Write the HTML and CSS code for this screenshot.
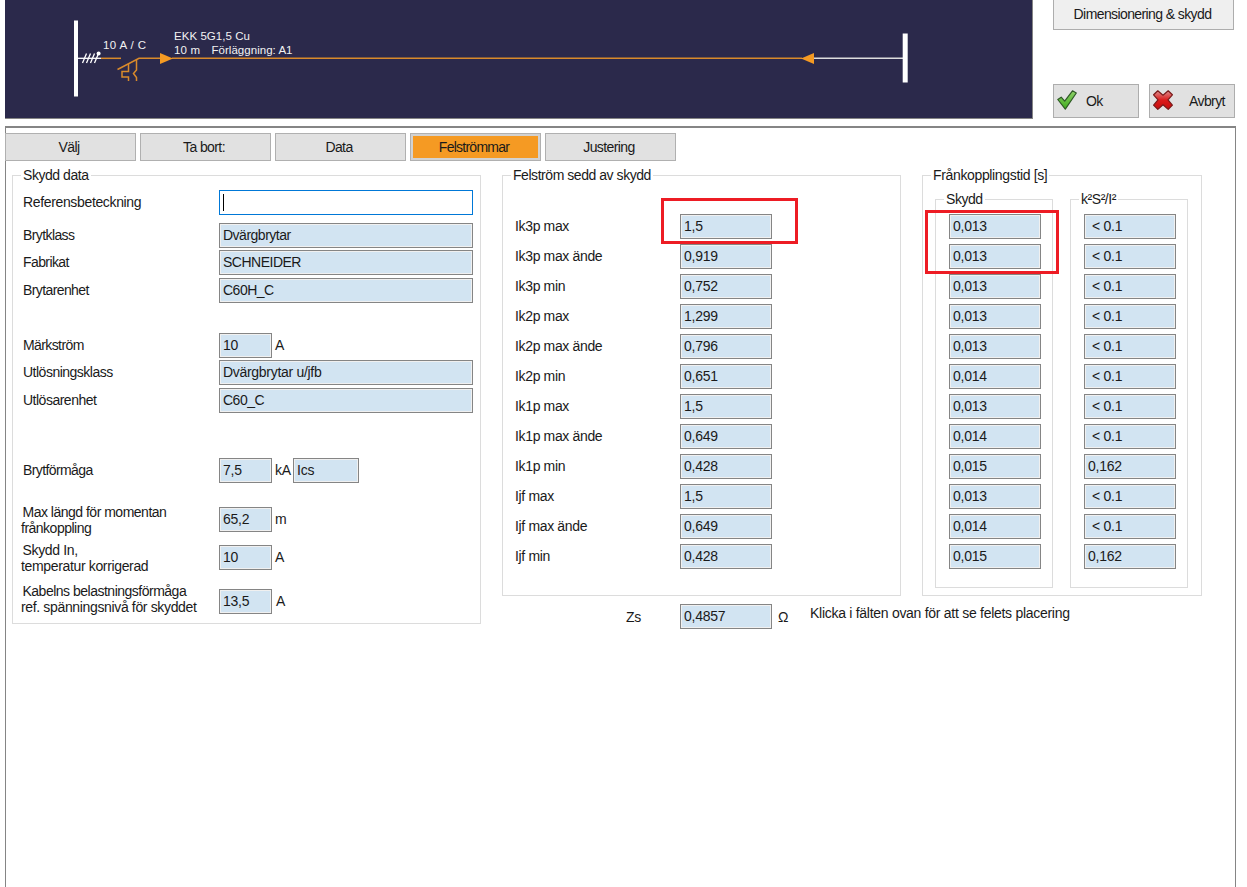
FILE: index.html
```html
<!DOCTYPE html>
<html lang="sv">

<head>
    <meta charset="UTF-8">
    <meta name="viewport" content="width=device-width, initial-scale=1.0">
    <title>Dimensionering &amp; skydd</title>
    <link rel="stylesheet" href="styles.css">
</head>

<body>
    <header class="top">
        <svg class="diagram" viewBox="5 0 1027 118" width="1027" height="118">
            <rect x="74" y="20.5" width="4" height="76" fill="#fff"/>
            <path d="M78 58.3H101" stroke="#fff" stroke-width="1.3"/>
            <path d="M82.500 63l4-9.500M86.500 63l4-9.500M90.500 63l4-9.500M94.500 63l4-9.500" stroke="#fff" stroke-width="1.3"/>
            <circle cx="98.6" cy="53.5" r="2" fill="#fff"/>
            <g fill="none" stroke="#d98a2b" stroke-width="1.5">
                <path d="M101 58.3H121"/>
                <path d="M117.500 69.500L139 58.3H161"/>
                <path d="M128.500 64v7.500h-6.500v5.500h6.500v4"/>
                <path d="M136.500 60v10l-3 3.500 3 4v3.500"/>
                <path d="M172 58.3H802"/>
            </g>
            <path d="M160 53v11l13-5.500z" fill="#f59a23"/>
            <path d="M814 53v11l-13-5.500z" fill="#f59a23"/>
            <path d="M814 58.3H903" stroke="#ddd" stroke-width="1.4"/>
            <rect x="902.700" y="33.500" width="5" height="49" fill="#fff"/>
            <text x="103" y="48.500" textLength="43">10 A / C</text>
            <text x="174" y="40" textLength="76">EKK 5G1,5 Cu</text>
            <text x="174" y="54" textLength="26">10 m</text>
            <text x="211.500" y="54" textLength="81">Förläggning: A1</text>
        </svg>
        <div class="actions">
            <button class="btn btn-dim">Dimensionering &amp; skydd</button>
            <div class="action-row">
                <button class="btn btn-action">
                    <svg width="20" height="20" viewBox="0 0 20 20">
                        <defs>
                            <linearGradient id="green" x1="0" y1="0" x2="0" y2="1">
                                <stop offset="0" stop-color="#8fd06a"/>
                                <stop offset="1" stop-color="#3fae1d"/>
                            </linearGradient>
                        </defs>
                        <path d="M.8 9.500l3.400-2.300 3.500 4L15.500.8l3.800 2.200L8.300 19.200z" fill="url(#green)" stroke="#2f5a26" stroke-width="1.200" stroke-linejoin="round"/>
                    </svg>
                    <span class="ok-text">Ok</span>
                </button>
                <button class="btn btn-action">
                    <svg width="20" height="20" viewBox="0 0 20 20">
                        <defs>
                            <linearGradient id="red" x1="0" y1="0" x2="0" y2="1">
                                <stop offset="0" stop-color="#dd9090"/>
                                <stop offset=".5" stop-color="#dc1a1a"/>
                                <stop offset="1" stop-color="#c40d0d"/>
                            </linearGradient>
                        </defs>
                        <path d="M4.800.8L10 5.200 15.200.8l4.200 4-4.400 5 4.400 5.400-4.200 4.200L10 14.700l-5.200 4.700-4.200-4.200L5 9.800l-4.400-5z" fill="url(#red)" stroke="#7a1a1a" stroke-width="1.200" stroke-linejoin="round"/>
                    </svg>
                    <span class="avbryt-text">Avbryt</span>
                </button>
            </div>
        </div>
    </header>

    <main class="panel">
        <nav class="tabs">
            <button class="tab">Välj</button>
            <button class="tab">Ta bort:</button>
            <button class="tab">Data</button>
            <button class="tab active">Felströmmar</button>
            <button class="tab">Justering</button>
        </nav>

        <div class="columns">
            <fieldset class="group protection">
                <legend>Skydd data</legend>
                <div class="row"><label>Referensbeteckning</label><div class="field wide focused"><i class="caret"></i></div></div>
                <div class="row gap-8"><label class="tight">Brytklass</label><div class="field wide">Dvärgbrytar</div></div>
                <div class="row gap-2"><label class="tight">Fabrikat</label><div class="field wide">SCHNEIDER</div></div>
                <div class="row gap-3"><label class="tight">Brytarenhet</label><div class="field wide">C60H_C</div></div>
                <div class="row gap-30"><label class="tight">Märkström</label><div class="field short">10</div><span class="unit">A</span></div>
                <div class="row gap-2"><label class="medium">Utlösningsklass</label><div class="field wide loose">Dvärgbrytar u/jfb</div></div>
                <div class="row gap-3"><label class="medium">Utlösarenhet</label><div class="field wide">C60_C</div></div>
                <div class="row gap-45"><label class="tight">Brytförmåga</label><div class="field short">7,5</div><span class="unit">kA</span><div class="field ics">Ics</div></div>
                <div class="row gap-24"><label class="two medium">Max längd för momentan<br>frånkoppling</label><div class="field short">65,2</div><span class="unit">m</span></div>
                <div class="row gap-13"><label class="two">Skydd In,<br>temperatur korrigerad</label><div class="field short">10</div><span class="unit">A</span></div>
                <div class="row gap-19"><label class="two up"><span class="medium">Kabelns belastningsförmåga</span><br>ref. spänningsnivå för skyddet</label><div class="field short">13,5</div><span class="unit last">A</span></div>
            </fieldset>

            <div class="middle">
                <fieldset class="group currents">
                    <legend>Felström sedd av skydd</legend>
                    <div class="line"><label>Ik3p max</label><div class="field">1,5</div></div>
                    <div class="line"><label>Ik3p max ände</label><div class="field">0,919</div></div>
                    <div class="line"><label>Ik3p min</label><div class="field">0,752</div></div>
                    <div class="line"><label>Ik2p max</label><div class="field">1,299</div></div>
                    <div class="line"><label>Ik2p max ände</label><div class="field">0,796</div></div>
                    <div class="line"><label>Ik2p min</label><div class="field">0,651</div></div>
                    <div class="line"><label>Ik1p max</label><div class="field">1,5</div></div>
                    <div class="line"><label>Ik1p max ände</label><div class="field">0,649</div></div>
                    <div class="line"><label>Ik1p min</label><div class="field">0,428</div></div>
                    <div class="line"><label>Ijf max</label><div class="field">1,5</div></div>
                    <div class="line"><label>Ijf max ände</label><div class="field">0,649</div></div>
                    <div class="line"><label>Ijf min</label><div class="field">0,428</div></div>
                </fieldset>
                <div class="impedance">
                    <label>Zs</label>
                    <div class="field">0,4857</div>
                    <span class="ohm">Ω</span>
                    <span class="hint">Klicka i fälten ovan för att se felets placering</span>
                </div>
            </div>

            <fieldset class="group times">
                <legend>Frånkopplingstid [s]</legend>
                <div class="time-columns">
                    <fieldset class="group inner">
                        <legend>Skydd</legend>
                        <div class="field">0,013</div>
                        <div class="field">0,013</div>
                        <div class="field">0,013</div>
                        <div class="field">0,013</div>
                        <div class="field">0,013</div>
                        <div class="field">0,014</div>
                        <div class="field">0,013</div>
                        <div class="field">0,014</div>
                        <div class="field">0,015</div>
                        <div class="field">0,013</div>
                        <div class="field">0,014</div>
                        <div class="field">0,015</div>
                    </fieldset>
                    <fieldset class="group inner">
                        <legend>k²S²/I²</legend>
                        <div class="field less">&lt; 0.1</div>
                        <div class="field less">&lt; 0.1</div>
                        <div class="field less">&lt; 0.1</div>
                        <div class="field less">&lt; 0.1</div>
                        <div class="field less">&lt; 0.1</div>
                        <div class="field less">&lt; 0.1</div>
                        <div class="field less">&lt; 0.1</div>
                        <div class="field less">&lt; 0.1</div>
                        <div class="field">0,162</div>
                        <div class="field less">&lt; 0.1</div>
                        <div class="field less">&lt; 0.1</div>
                        <div class="field">0,162</div>
                    </fieldset>
                </div>
            </fieldset>
        </div>

        <div class="mark mark-current"></div>
        <div class="mark mark-time"></div>
    </main>
</body>

</html>
```
FILE: styles.css
```css
* {
    margin: 0;
    padding: 0;
    box-sizing: border-box;
}

body {
    width: 1247px;
    height: 887px;
    overflow: hidden;
    background: #fff;
    color: #1a1a1a;
    font-family: "Liberation Sans", Arial, sans-serif;
    font-size: 14px;
    letter-spacing: -0.35px;
    padding-left: 5px;
}

button {
    font: inherit;
    letter-spacing: -0.6px;
    color: inherit;
}

.tight {
    letter-spacing: -0.6px;
}

.medium {
    letter-spacing: -0.5px;
}

/* top area */
.top {
    display: flex;
    height: 126px;
}

.diagram {
    display: block;
    width: 1028px;
    height: 119px;
    background: #2b294b;
    border-right: 1px solid #858585;
    border-bottom: 1px solid #858585;
}

.diagram text {
    fill: #f2f2f2;
    font-size: 11.5px;
    letter-spacing: 0;
}

.actions {
    margin-left: 20px;
}

.btn {
    display: flex;
    align-items: center;
    background: #e1e1e1;
    border: 1px solid #adadad;
}

.btn-dim {
    justify-content: center;
    width: 181px;
    height: 30px;
    padding: 0 2px 2px 0;
    background: #efefef;
    border-top: none;
}

.action-row {
    display: flex;
    gap: 10px;
    margin-top: 54px;
}

.btn-action {
    width: 86px;
    height: 34px;
    padding: 0 0 2px 3px;
}

.ok-text {
    margin-left: 9px;
    padding-top: 2px;
}

.avbryt-text {
    margin-left: 16px;
    padding-top: 2px;
}

/* main panel */
.panel {
    position: relative;
    width: 1231px;
    height: 770px;
    border: 1px solid #858585;
    border-top-width: 2px;
}

.tabs {
    display: flex;
    gap: 4px;
    margin: 5px 0 0 -1px;
}

.tab {
    width: 131px;
    height: 28px;
    padding-right: 3px;
    background: #e1e1e1;
    border: 1px solid #b0b0b0;
}

.tab.active {
    background: #f59a23;
    letter-spacing: -0.75px;
    box-shadow: inset 0 0 0 2px #d2d2d2;
}

.columns {
    display: flex;
    align-items: flex-start;
    margin: 6px 0 0 6px;
}

.group {
    border: 1px solid #dcdcdc;
}

.group legend {
    height: 16px;
    line-height: 16px;
    margin-left: 8px;
    padding: 0 2px;
    letter-spacing: -0.45px;
}

.field {
    width: 92px;
    height: 25px;
    padding-left: 3px;
    line-height: 23px;
    background: #d2e4f2;
    border: 1px solid #858585;
    box-shadow: inset 0 0 0 1px #f0f0f0;
    white-space: pre;
    letter-spacing: -0.25px;
}

/* Skydd data */
.protection {
    width: 469px;
    height: 457px;
}

.row {
    display: flex;
    align-items: center;
    height: 25px;
}

.protection legend + .row {
    margin-top: 7px;
}

.row label {
    width: 206px;
    padding: 0 0 1px 10px;
}

.row label.two {
    padding: 0 0 0 8px;
    line-height: 16px;
    text-indent: 1.5px;
}

.row label.up {
    margin-top: -5px;
}

.gap-2 { margin-top: 2px; }
.gap-3 { margin-top: 3px; }
.gap-8 { margin-top: 8px; }
.gap-13 { margin-top: 13px; }
.gap-19 { margin-top: 19px; }
.gap-24 { margin-top: 24px; }
.gap-30 { margin-top: 30px; }
.gap-45 { margin-top: 45px; }

.field.wide {
    width: 254px;
    letter-spacing: -0.5px;
}

.field.wide.loose {
    letter-spacing: -0.3px;
}

.field.short {
    width: 53px;
}

.field.ics {
    width: 66px;
}

.field.focused {
    background: #fff;
    border-color: #0078d7;
    box-shadow: none;
}

.caret {
    display: block;
    width: 1px;
    height: 17px;
    margin-top: 3px;
    background: #000;
}

.unit {
    width: 21px;
    padding: 0 0 1px 3px;
}

.unit.last {
    padding-left: 4px;
}

/* Felström */
.middle {
    width: 399px;
    margin-left: 21px;
}

.currents {
    height: 429px;
}

.currents legend + .line {
    margin-top: 31px;
}

.line {
    display: flex;
    align-items: center;
    height: 25px;
    margin-bottom: 5px;
}

.line label {
    width: 177px;
    padding: 0 0 1px 12px;
}

.impedance {
    display: flex;
    align-items: center;
    margin-top: 8px;
    white-space: nowrap;
}

.impedance label {
    flex: none;
    width: 178px;
    padding-left: 124px;
}

.impedance .field {
    flex: none;
}

.ohm {
    width: 38px;
    flex: none;
    padding-left: 6px;
}

.hint {
    padding-bottom: 7px;
    letter-spacing: -0.28px;
}

/* Frånkopplingstid */
.times {
    width: 280px;
    height: 429px;
    margin-left: 21px;
}

.times > legend {
    letter-spacing: -0.35px;
}

.time-columns {
    display: flex;
    gap: 17px;
    padding: 8px 0 0 12px;
}

.inner {
    width: 118px;
    height: 397px;
}

.inner .field {
    margin: 0 0 5px 13px;
}

.inner legend + .field {
    margin-top: 7px;
}

.field.less {
    padding-left: 7px;
}

/* red markers */
.mark {
    position: absolute;
    border: 3px solid #ed1c24;
}

.mark-current {
    left: 655px;
    top: 70px;
    width: 137px;
    height: 46px;
}

.mark-time {
    left: 919px;
    top: 82px;
    width: 134px;
    height: 64px;
}
```
